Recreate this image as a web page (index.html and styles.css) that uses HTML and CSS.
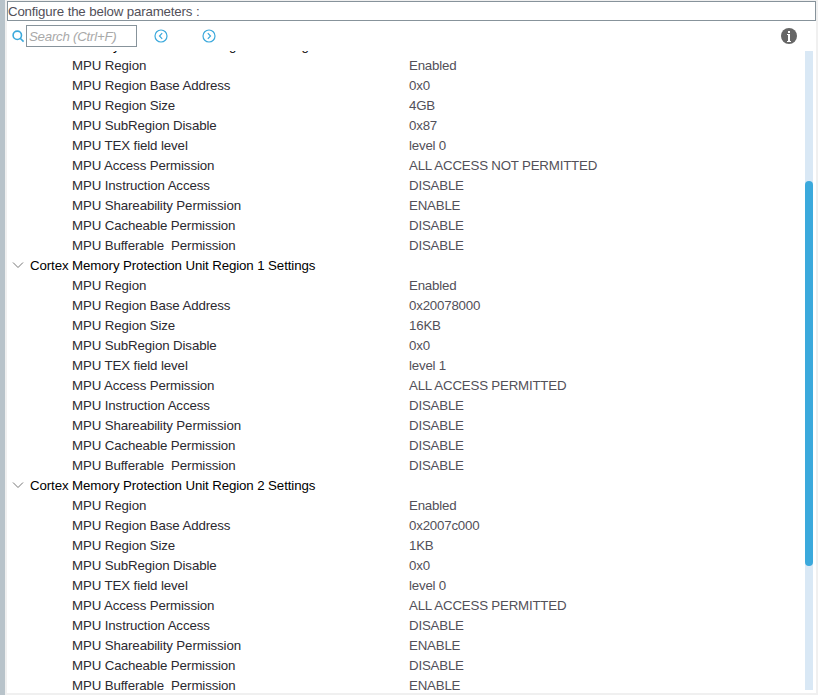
FILE: index.html
```html
<!DOCTYPE html>
<html lang="en">
<head>
<meta charset="UTF-8" />
<title>MPU Parameters</title>
<link rel="stylesheet" href="styles.css">
</head>
<body>

<div class="panel">
  <div class="panel-title">Configure the below parameters :</div>

  <div class="toolbar">
    <svg class="search-icon" width="13" height="13" viewBox="0 0 13 13">
      <circle cx="5.3" cy="5.3" r="4.2" />
      <path d="M8.2 8.2 L11.6 11.6" />
    </svg>
    <input class="search" type="text" placeholder="Search (Ctrl+F)" />
    <svg class="nav-icon prev" width="14" height="14" viewBox="0 0 14 14">
      <circle cx="7" cy="7" r="6" />
      <path d="M8.2 4.2 L5.5 7 L8.2 9.8" />
    </svg>
    <svg class="nav-icon next" width="14" height="14" viewBox="0 0 14 14">
      <circle cx="7" cy="7" r="6" />
      <path d="M5.8 4.2 L8.5 7 L5.8 9.8" />
    </svg>
    <svg class="info-icon" width="16" height="16" viewBox="0 0 16 16">
      <circle cx="8" cy="8" r="8" fill="#666" />
      <path d="M7 3h2v2H7z M6 6h3v7h1v1H6v-1h1V7H6z" fill="#fff" />
    </svg>
  </div>

  <div class="content">
    <div class="tree" id="tree"></div>
    <div class="scrollbar"><div class="thumb"></div></div>
  </div>
</div>

<script src="script.js"></script>
</body>
</html>
```

FILE: styles.css
```css
* {
  box-sizing: border-box;
}
body {
  margin: 0;
  height: 695px;
  overflow: hidden;
  padding: 1px 2px 2px 7px;
  background: linear-gradient(to right, #b8c3ca 5px, #f0f0f0 5px);
  font-family: "Liberation Sans", Arial, sans-serif;
  font-size: 13.3px;
}

.panel {
  display: flex;
  flex-direction: column;
  height: 692px;
  background: #fff;
}

.panel-title {
  height: 20px;
  border: 1px solid #87939b;
  line-height: 19px;
  letter-spacing: -0.2px;
  word-spacing: 0.3px;
  color: #525059;
}

/* Toolbar */
.toolbar {
  display: flex;
  align-items: center;
  height: 30px;
  padding: 0 19px 0 5px;
}
.search-icon,
.nav-icon {
  fill: none;
  stroke: #3ba9dc;
}
.search-icon {
  stroke-width: 1.6;
  margin-right: 1px;
}
.nav-icon {
  stroke-width: 1.2;
}
.search {
  width: 111px;
  height: 22px;
  padding: 0 2px;
  border: 1px solid #87939b;
  font: italic 13.3px "Liberation Sans", Arial, sans-serif;
  letter-spacing: -0.25px;
  outline: none;
}
.search::placeholder {
  color: #a9a9a9;
}
.prev {
  margin-left: 17px;
}
.next {
  margin-left: 34px;
}
.info-icon {
  margin-left: auto;
}

/* Parameter tree */
.content {
  display: flex;
  height: 642px;
}
.tree {
  flex: 1;
  overflow: hidden;
}
.group:first-child {
  margin-top: -16px;
}
.group-title,
.row {
  display: flex;
  height: 20px;
  line-height: 21px;
  white-space: pre;
}
.group-title {
  align-items: center;
  padding-left: 5px;
  letter-spacing: -0.11px;
  color: #000;
}
.group-title svg {
  margin-right: 6px;
  fill: none;
  stroke: #777;
}
.row {
  padding-left: 65px;
}
.label {
  width: 337px;
  letter-spacing: -0.12px;
  color: #2b2930;
}
.value {
  letter-spacing: -0.2px;
  color: #525059;
}

/* Scrollbar */
.scrollbar {
  width: 8px;
  height: 639px;
  margin-right: 3px;
  padding-top: 130px;
  background: #d9e8f5;
}
.thumb {
  height: 385px;
  border-radius: 4px;
  background: #3ba9dc;
}
```

FILE: script.js
```javascript
const labels = [
  'MPU Region',
  'MPU Region Base Address',
  'MPU Region Size',
  'MPU SubRegion Disable',
  'MPU TEX field level',
  'MPU Access Permission',
  'MPU Instruction Access',
  'MPU Shareability Permission',
  'MPU Cacheable Permission',
  'MPU Bufferable  Permission'
];

const regions = [
  ['Enabled', '0x0', '4GB', '0x87', 'level 0', 'ALL ACCESS NOT PERMITTED', 'DISABLE', 'ENABLE', 'DISABLE', 'DISABLE'],
  ['Enabled', '0x20078000', '16KB', '0x0', 'level 1', 'ALL ACCESS PERMITTED', 'DISABLE', 'DISABLE', 'DISABLE', 'DISABLE'],
  ['Enabled', '0x2007c000', '1KB', '0x0', 'level 0', 'ALL ACCESS PERMITTED', 'DISABLE', 'ENABLE', 'DISABLE', 'ENABLE']
];

const arrow = '<svg width="12" height="8" viewBox="0 0 12 8"><path d="M1 1.5 L6 6.5 L11 1.5" /></svg>';

document.getElementById('tree').innerHTML = regions.map((values, i) => `
  <div class="group">
    <div class="group-title">${arrow}<span>Cortex Memory Protection Unit Region ${i} Settings</span></div>
    ${values.map((value, j) => `<div class="row"><span class="label">${labels[j]}</span><span class="value">${value}</span></div>`).join('')}
  </div>`).join('');
```
